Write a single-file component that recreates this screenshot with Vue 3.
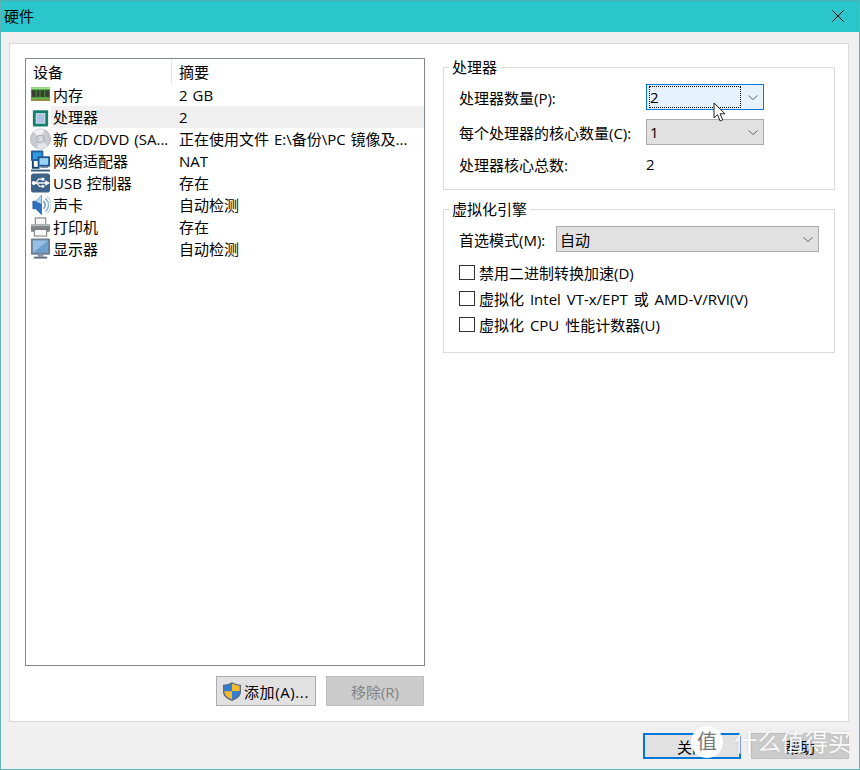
<template>
  <div class="window">
    <div class="titlebar">
      <span class="title">硬件</span>
      <svg class="close" width="14" height="14" viewBox="0 0 14 14">
        <path d="M1.5 1.5l11 11M12.5 1.5l-11 11" stroke="#000" stroke-width="1" fill="none" />
      </svg>
    </div>

    <div class="body">
      <div class="panel">
        <div class="left">
          <div class="listbox">
            <div class="list-head">
              <div class="head-cell first">设备</div>
              <div class="head-cell">摘要</div>
            </div>
            <div v-for="d in devices" :key="d.name" class="row">
              <div class="icon-cell">
                <svg width="22" height="22" viewBox="0 0 22 22">
                  <g v-if="d.icon === 'ram'">
                    <rect x="1" y="3" width="20" height="14" fill="#3f9a3c" />
                    <rect x="1" y="3" width="20" height="2" fill="#a6dc8a" />
                    <rect x="2" y="6" width="4" height="7" fill="#3c3c30" />
                    <rect x="7" y="6" width="3" height="7" fill="#3c3c30" />
                    <rect x="11" y="6" width="4" height="7" fill="#3c3c30" />
                    <rect x="16" y="6" width="4" height="7" fill="#3c3c30" />
                    <rect x="1" y="14" width="20" height="1" fill="#7cc466" />
                    <rect x="1" y="15" width="20" height="2" fill="#8a8f3a" />
                  </g>
                  <g v-else-if="d.icon === 'cpu'">
                    <rect x="3" y="4" width="16" height="17" rx="1" fill="#17806c" />
                    <rect x="6" y="7" width="10" height="11" fill="#d5e4f2" />
                    <rect x="7" y="8" width="8" height="9" fill="#a9c4e2" />
                  </g>
                  <g v-else-if="d.icon === 'cd'">
                    <circle cx="11" cy="11" r="10.500" fill="#c8cbd0" stroke="#b4b7bc" />
                    <path d="M11 11L3.500 3.500A10.500 10.500 0 0 1 15 1.500z" fill="#eef0f2" />
                    <path d="M11 11L18.500 18.500A10.500 10.500 0 0 1 7 20.500z" fill="#e4e6e9" />
                    <circle cx="11" cy="11" r="4" fill="#dcdee1" stroke="#a0a3a8" />
                    <circle cx="11" cy="11" r="1.500" fill="#fff" stroke="#a8aaae" stroke-width="0.7" />
                  </g>
                  <g v-else-if="d.icon === 'net'">
                    <rect x="1" y="0" width="13" height="11" rx="1" fill="#1f5f9e" />
                    <rect x="3" y="2" width="9" height="7" fill="#2e9ae0" />
                    <path d="M3 11v7h7" stroke="#17446f" stroke-width="2" fill="none" />
                    <rect x="8" y="6" width="13" height="11" rx="1" fill="#21588f" />
                    <rect x="10" y="8" width="9" height="7" fill="#9ad2f6" />
                    <rect x="11" y="17" width="8" height="1" fill="#557" />
                    <rect x="1" y="20" width="20" height="2" fill="#3b5f85" />
                  </g>
                  <g v-else-if="d.icon === 'usb'">
                    <rect x="1" y="1" width="20" height="20" rx="3" fill="#3d6288" />
                    <path d="M3 11h14" stroke="#fff" stroke-width="1.500" />
                    <path d="M16 8l5 3-5 3z" fill="#fff" />
                    <circle cx="4" cy="11" r="2.200" fill="#fff" />
                    <path d="M6 11l3-4h3M7 11l3 3.500h2" stroke="#fff" stroke-width="1.200" fill="none" />
                    <rect x="12" y="5.500" width="3" height="3" fill="#fff" />
                    <circle cx="13.500" cy="14.500" r="1.600" fill="#fff" />
                  </g>
                  <g v-else-if="d.icon === 'sound'">
                    <path d="M3 7h3l6-6v20l-6-6H3z" fill="#2f6fc0" stroke="#1f4d8a" stroke-width="0.700" />
                    <path d="M6 7l6-6v9z" fill="#b5d6f3" />
                    <path d="M14 7a5 5 0 0 1 0 8" stroke="#5f93cf" stroke-width="1.500" fill="none" />
                    <path d="M16 4a9 9 0 0 1 0 14" stroke="#8fb5dc" stroke-width="1.500" fill="none" />
                    <path d="M18 2a12 12 0 0 1 0 18" stroke="#bcd2e8" stroke-width="1.200" fill="none" />
                  </g>
                  <g v-else-if="d.icon === 'printer'">
                    <rect x="5.500" y="1.500" width="11" height="7" fill="#f6f6f6" stroke="#6f7378" />
                    <rect x="1" y="8" width="20" height="8" rx="1" fill="#7f848b" />
                    <rect x="1" y="8" width="20" height="2" fill="#b4b7bc" />
                    <rect x="4.500" y="13.500" width="13" height="7" fill="#fafafa" stroke="#6f7378" />
                    <rect x="17" y="10" width="2" height="1" fill="#3fb54a" />
                  </g>
                  <g v-else>
                    <rect x="1" y="0" width="20" height="17" rx="1" fill="#6d7f94" />
                    <rect x="3" y="2" width="16" height="13" fill="#6f9fcc" />
                    <path d="M3 2h16L3 15z" fill="#97bfe3" />
                    <rect x="8" y="17" width="6" height="2" fill="#88939e" />
                    <rect x="4" y="19" width="14" height="2" fill="#5d6b78" />
                  </g>
                </svg>
              </div>
              <div class="row-body" :class="{ selected: d.selected }">
                <div class="cell-name">{{ d.name }}</div>
                <div class="cell-summary">{{ d.summary }}</div>
              </div>
            </div>
          </div>
          <div class="list-actions">
            <button class="btn add">
              <svg width="18" height="19" viewBox="2 1 16 19.300" preserveAspectRatio="none">
                <path d="M10 1c2.500 1.800 5 2.600 8 2.800V11c0 4.500-3.500 7.500-8 9.300C5.500 18.500 2 15.500 2 11V3.800C5 3.600 7.500 2.800 10 1z" fill="#5b6b85" />
                <path d="M10 2.500V10.500H3.200V4.800C5.800 4.500 8 3.800 10 2.500z" fill="#2f7fd6" />
                <path d="M10 2.500c2 1.300 4.200 2 6.800 2.300v5.700H10z" fill="#f6bb28" />
                <path d="M3.200 10.500H10v8.300C6.300 17.200 3.400 14.700 3.200 10.500z" fill="#f6bb28" />
                <path d="M10 10.500h6.800c-.2 4.200-3.100 6.700-6.800 8.300z" fill="#2f7fd6" />
              </svg>
              <span class="add-label">添加(A)...</span>
            </button>
            <button class="btn disabled">移除(R)</button>
          </div>
        </div>

        <div class="right">
          <fieldset class="group cpu">
            <legend>处理器</legend>
            <div class="form-row r1">
              <label>处理器数量(P):</label>
              <div class="combo focused">
                <span class="combo-value">2</span>
                <svg class="chev" width="10" height="5" viewBox="0 0 10 5"><path d="M.5.500l4.500 4 4.500-4" stroke="#666" fill="none" /></svg>
              </div>
            </div>
            <div class="form-row r2">
              <label>每个处理器的核心数量(C):</label>
              <div class="combo">
                <span class="combo-value">1</span>
                <svg class="chev" width="10" height="5" viewBox="0 0 10 5"><path d="M.5.500l4.500 4 4.500-4" stroke="#666" fill="none" /></svg>
              </div>
            </div>
            <div class="form-row r3">
              <label>处理器核心总数:</label>
              <span class="total">2</span>
            </div>
          </fieldset>

          <fieldset class="group engine">
            <legend>虚拟化引擎</legend>
            <div class="mode-row">
              <label>首选模式(M):</label>
              <div class="combo wide">
                <span class="combo-value">自动</span>
                <svg class="chev" width="10" height="5" viewBox="0 0 10 5"><path d="M.5.500l4.500 4 4.500-4" stroke="#666" fill="none" /></svg>
              </div>
            </div>
            <div v-for="c in checks" :key="c" class="check-row">
              <span class="box"></span>
              <span>{{ c }}</span>
            </div>
          </fieldset>
        </div>
      </div>

      <div class="footer">
        <button class="btn primary">关闭</button>
        <button class="btn help">帮助</button>
      </div>
    </div>

    <!-- mouse pointer over the combo -->
    <svg class="pointer" width="14" height="21" viewBox="0 0 14 21">
      <path d="M1 1v15l3.500-3.300 2.600 6.300 2.600-1.100-2.600-6.100h4.900z" fill="#fff" stroke="#222" stroke-width="1" />
    </svg>

    <!-- site watermark -->
    <div class="watermark">
      <span class="wm-circle">值</span>
      <span class="wm-text">什么值得买</span>
    </div>
  </div>
</template>

<script setup>
const devices = [
  { icon: "ram", name: "内存", summary: "2 GB" },
  { icon: "cpu", name: "处理器", summary: "2", selected: true },
  { icon: "cd", name: "新 CD/DVD (SA...", summary: "正在使用文件 E:\\备份\\PC 镜像及..." },
  { icon: "net", name: "网络适配器", summary: "NAT" },
  { icon: "usb", name: "USB 控制器", summary: "存在" },
  { icon: "sound", name: "声卡", summary: "自动检测" },
  { icon: "printer", name: "打印机", summary: "存在" },
  { icon: "monitor", name: "显示器", summary: "自动检测" },
];

const checks = [
  "禁用二进制转换加速(D)",
  "虚拟化 Intel VT-x/EPT 或 AMD-V/RVI(V)",
  "虚拟化 CPU 性能计数器(U)",
];
</script>

<style scoped>
.window {
  position: relative;
  width: 860px;
  height: 770px;
  box-sizing: border-box;
  border: 1px solid #5fb4b8;
  border-top-color: #4fb0b4;
  background: #f0f0f0;
  font-family: "Open Sans", "Noto Sans CJK SC", sans-serif;
  font-size: 15px;
  word-spacing: 1px;
  color: #000;
  overflow: hidden;
}

.titlebar {
  height: 31px;
  background: #2bc6cb;
  display: flex;
  align-items: center;
  justify-content: space-between;
  box-sizing: border-box;
  padding: 0 14px 2px 3px;
}

.body {
  padding: 11px 10px 0 8px;
}

.panel {
  box-sizing: border-box;
  height: 679px;
  background: #fff;
  border: 1px solid #d9d9d9;
  padding: 14px 13px 0 15px;
  display: flex;
}

.left {
  width: 400px;
  flex-shrink: 0;
}

.listbox {
  box-sizing: border-box;
  height: 608px;
  border: 1px solid #828790;
  background: #fff;
}

.list-head {
  display: flex;
  height: 25px;
}

.head-cell {
  line-height: 26px;
  padding-left: 7px;
}

.head-cell.first {
  width: 146px;
  padding-left: 7px;
  box-sizing: border-box;
  border-right: 1px solid #e5e5e5;
}

.row {
  display: flex;
  height: 22px;
  line-height: 22px;
}

.icon-cell {
  width: 25px;
  padding-left: 4px;
  box-sizing: border-box;
  flex-shrink: 0;
}

.icon-cell svg {
  display: block;
  width: 21px;
  height: 22px;
}

.row-body {
  flex: 1;
  display: flex;
  padding-left: 2px;
}

.row-body.selected {
  background: #f0f0f0;
}

.cell-name {
  width: 126px;
  flex-shrink: 0;
  white-space: nowrap;
}

.cell-summary {
  white-space: nowrap;
}

.list-actions {
  display: flex;
  justify-content: flex-end;
  gap: 10px;
  margin-top: 10px;
  margin-right: 1px;
}

.btn {
  box-sizing: border-box;
  font: inherit;
  word-spacing: inherit;
  color: #000;
  background: #e1e1e1;
  border: 1px solid #adadad;
  padding: 0;
  display: flex;
  align-items: center;
  justify-content: center;
}

.add {
  width: 100px;
  height: 30px;
  gap: 3px;
  justify-content: flex-start;
  padding-left: 6px;
}

.add-label {
  letter-spacing: 0.6px;
}

.disabled {
  width: 98px;
  height: 30px;
  background: #cccccc;
  border-color: #bfbfbf;
  color: #838383;
}

.right {
  margin-left: 18px;
  flex: 1;
}

.group {
  box-sizing: border-box;
  margin: 0;
  padding: 0;
  border: 1px solid #dcdcdc;
  min-width: 0;
  position: relative;
}

.group legend {
  margin-left: 5px;
  padding: 0 3px;
  line-height: 18px;
}

.cpu {
  height: 132px;
}

.engine {
  height: 153px;
  margin-top: 10px;
}

.form-row {
  display: flex;
  align-items: center;
  padding-left: 15px;
}

.form-row label {
  width: 187px;
  flex-shrink: 0;
  white-space: nowrap;
}

.r1 {
  margin-top: 8px;
  height: 26px;
}

.r2 {
  margin-top: 9px;
  height: 26px;
}

.r3 {
  margin-top: 6px;
  height: 26px;
}

.combo {
  box-sizing: border-box;
  width: 118px;
  height: 26px;
  border: 1px solid #adadad;
  background: #e1e1e1;
  display: flex;
  align-items: center;
  justify-content: space-between;
  padding: 0 5px 0 3px;
  position: relative;
}

.combo.focused {
  border-color: #0078d7;
  background: #e5f1fb;
}

.combo.focused::before {
  content: "";
  position: absolute;
  left: 2px;
  top: 1px;
  width: 92px;
  height: 22px;
  box-sizing: border-box;
  border: 1px dotted #000;
}

.combo.wide {
  width: 263px;
}

.chev {
  flex-shrink: 0;
}

.mode-row {
  display: flex;
  align-items: center;
  padding-left: 15px;
  height: 26px;
  margin-top: 8px;
}

.mode-row label {
  white-space: nowrap;
  width: 97px;
  flex-shrink: 0;
}

.check-row {
  display: flex;
  align-items: center;
  gap: 4px;
  height: 26px;
  padding-left: 15px;
  white-space: pre;
  word-spacing: 2px;
}

.mode-row + .check-row {
  margin-top: 7px;
}

.box {
  box-sizing: border-box;
  width: 16px;
  height: 15px;
  border: 1px solid #333;
  background: #fff;
  flex-shrink: 0;
}

.footer {
  display: flex;
  justify-content: flex-end;
  gap: 10px;
  margin-top: 11px;
}

.footer .btn {
  width: 98px;
  height: 26px;
}

.primary {
  border: 2px solid #0078d7;
}

.help {
  background: #cccccc;
  border-color: #bfbfbf;
}

.pointer {
  position: absolute;
  left: 712px;
  top: 101px;
}

.watermark {
  position: absolute;
  left: 690px;
  top: 725px;
  display: flex;
  align-items: center;
  gap: 11px;
  color: rgba(255, 255, 255, 0.92);
  text-shadow: 0 0 3px rgba(150, 150, 150, 0.35);
  white-space: nowrap;
}

.wm-circle {
  width: 32px;
  height: 32px;
  border-radius: 50%;
  background: rgba(255, 255, 255, 0.95);
  color: #777;
  font-size: 20px;
  line-height: 32px;
  text-align: center;
  text-shadow: none;
}

.wm-text {
  font-size: 23.500px;
  line-height: 32px;
}
</style>

<style>
html,
body {
  margin: 0;
  background: #f0f0f0;
}
</style>
